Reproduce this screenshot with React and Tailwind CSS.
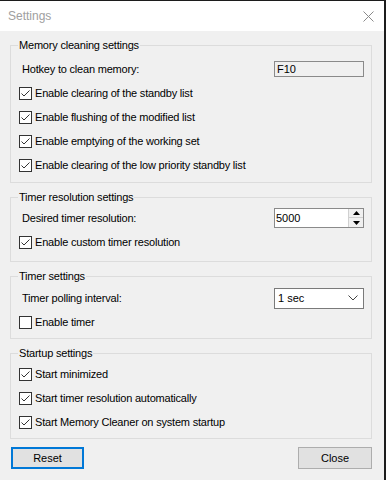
import React from "react";

const font = { fontFamily: '"Liberation Sans", Arial, sans-serif' };

function Check({ checked = true }) {
  return (
    <span className="w-[13px] h-[13px] border border-[#333333] bg-white flex items-center justify-center shrink-0">
      {checked && (
        <svg width="11" height="11" viewBox="0 0 11 11">
          <path d="M1.5 5.5 L4 8 L9.5 2.5" fill="none" stroke="#333333" strokeWidth="1" />
        </svg>
      )}
    </span>
  );
}

function CheckRow({ label, checked = true }) {
  return (
    <div className="h-[24px] flex items-center pl-[8px]">
      <Check checked={checked} />
      <span className="ml-[3px] text-[11px] text-black tracking-[-0.2px]">{label}</span>
    </div>
  );
}

function Group({ title, children, className = "" }) {
  return (
    <fieldset className={"border border-[#dcdcdc] w-[362px] " + className}>
      <legend className="ml-[7px] px-[1px] text-[11px] leading-[13px] text-black tracking-[-0.2px]">{title}</legend>
      {children}
    </fieldset>
  );
}

export default function App() {
  return (
    <div className="w-[386px] h-[480px] bg-[#1c1c1c] pt-[1px]" style={font}>
      <div className="w-[384px] h-[479px] bg-[#f0f0f0] flex flex-col">
        <div className="h-[30px] bg-white flex items-center justify-between pl-[8px] pr-[10px] shrink-0">
          <span className="text-[12px] text-[#a0a0a0]">Settings</span>
          <svg width="11" height="11" viewBox="0 0 11 11">
            <path d="M0.5 0.5 L10.5 10.5 M10.5 0.5 L0.5 10.5" stroke="#8a8a8a" strokeWidth="1" />
          </svg>
        </div>
        <div className="pl-[10px] pt-[8px] flex flex-col">
          <Group title="Memory cleaning settings" className="pt-[5px] pb-[5px]">
            <div className="h-[24px] flex items-center justify-between pl-[11px] pr-[7px]">
              <span className="text-[11px] text-black tracking-[-0.2px]">Hotkey to clean memory:</span>
              <div className="w-[90px] h-[16px] border border-[#8a8a8a] bg-[#f0f0f0] flex items-center pl-[2px] text-[11px] text-black">F10</div>
            </div>
            <CheckRow label="Enable clearing of the standby list" />
            <CheckRow label="Enable flushing of the modified list" />
            <CheckRow label="Enable emptying of the working set" />
            <CheckRow label="Enable clearing of the low priority standby list" />
          </Group>
          <Group title="Timer resolution settings" className="mt-[8px] pt-[2px] pb-[7px]">
            <div className="h-[24px] flex items-center justify-between pl-[11px] pr-[7px]">
              <span className="text-[11px] text-black tracking-[-0.2px]">Desired timer resolution:</span>
              <div className="w-[90px] h-[20px] border border-[#8a8a8a] bg-white flex items-center">
                <span className="flex-1 pl-[1px] text-[11px] text-black">5000</span>
                <div className="w-[15px] h-[18px] flex flex-col border-l border-[#d0d0d0] bg-[#f0f0f0]">
                  <div className="h-[9px] flex items-center justify-center border-b border-[#d0d0d0]">
                    <svg width="7" height="4" viewBox="0 0 7 4"><path d="M3.5 0 L7 4 L0 4 Z" fill="#000" /></svg>
                  </div>
                  <div className="h-[9px] flex items-center justify-center">
                    <svg width="7" height="4" viewBox="0 0 7 4"><path d="M0 0 L7 0 L3.5 4 Z" fill="#000" /></svg>
                  </div>
                </div>
              </div>
            </div>
            <CheckRow label="Enable custom timer resolution" />
          </Group>
          <Group title="Timer settings" className="mt-[8px] pt-[3px] pb-[4px]">
            <div className="h-[24px] flex items-center justify-between pl-[11px] pr-[7px]">
              <span className="text-[11px] text-black tracking-[-0.2px]">Timer polling interval:</span>
              <div className="w-[90px] h-[21px] border border-[#7a7a7a] bg-white flex items-center justify-between pl-[3px] pr-[5px]">
                <span className="text-[11px] text-black">1 sec</span>
                <svg width="10" height="6" viewBox="0 0 10 6"><path d="M0.5 0.5 L5 5 L9.5 0.5" fill="none" stroke="#444" strokeWidth="1" /></svg>
              </div>
            </div>
            <CheckRow label="Enable timer" checked={false} />
          </Group>
          <Group title="Startup settings" className="mt-[8px] pt-[2px] pb-[4px]">
            <CheckRow label="Start minimized" />
            <CheckRow label="Start timer resolution automatically" />
            <CheckRow label="Start Memory Cleaner on system startup" />
          </Group>
          <div className="mt-[8px] w-[362px] flex justify-between pl-[1px]">
            <button className="w-[73px] h-[22px] border-2 border-[#0078d7] bg-[#e1e1e1] text-[11px] text-black">Reset</button>
            <button className="w-[74px] h-[22px] border border-[#adadad] bg-[#e1e1e1] text-[11px] text-black">Close</button>
          </div>
        </div>
      </div>
    </div>
  );
}
